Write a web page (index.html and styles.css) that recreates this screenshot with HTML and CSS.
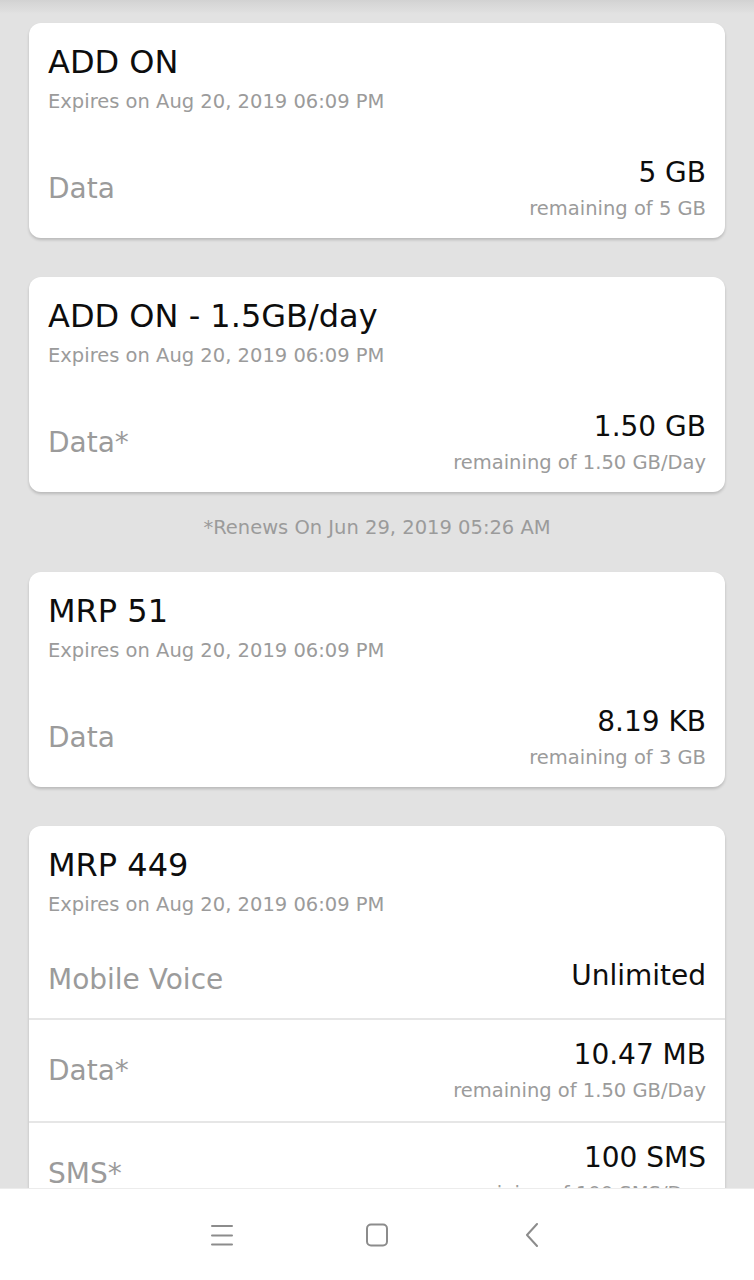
FILE: index.html
```html
<!DOCTYPE html>
<html lang="en">
<head>
    <meta charset="UTF-8">
    <meta name="viewport" content="width=device-width, initial-scale=1.0">
    <title>My Plans</title>
    <link rel="stylesheet" href="styles.css">
</head>
<body>
    <div class="top-shade"></div>

    <main class="plans">
        <section class="card">
            <div class="card-head">
                <h2>ADD ON</h2>
                <p class="expires">Expires on Aug 20, 2019 06:09 PM</p>
            </div>
            <div class="row">
                <span class="label">Data</span>
                <div class="amount">
                    <span class="value">5 GB</span>
                    <span class="sub">remaining of 5 GB</span>
                </div>
            </div>
        </section>

        <section class="card">
            <div class="card-head">
                <h2>ADD ON - 1.5GB/day</h2>
                <p class="expires">Expires on Aug 20, 2019 06:09 PM</p>
            </div>
            <div class="row">
                <span class="label">Data*</span>
                <div class="amount">
                    <span class="value">1.50 GB</span>
                    <span class="sub">remaining of 1.50 GB/Day</span>
                </div>
            </div>
        </section>

        <p class="renews">*Renews On Jun 29, 2019 05:26 AM</p>

        <section class="card">
            <div class="card-head">
                <h2>MRP 51</h2>
                <p class="expires">Expires on Aug 20, 2019 06:09 PM</p>
            </div>
            <div class="row">
                <span class="label">Data</span>
                <div class="amount">
                    <span class="value">8.19 KB</span>
                    <span class="sub">remaining of 3 GB</span>
                </div>
            </div>
        </section>

        <section class="card">
            <div class="card-head">
                <h2>MRP 449</h2>
                <p class="expires">Expires on Aug 20, 2019 06:09 PM</p>
            </div>
            <div class="row single">
                <span class="label">Mobile Voice</span>
                <div class="amount">
                    <span class="value">Unlimited</span>
                </div>
            </div>
            <div class="row divided">
                <span class="label">Data*</span>
                <div class="amount">
                    <span class="value">10.47 MB</span>
                    <span class="sub">remaining of 1.50 GB/Day</span>
                </div>
            </div>
            <div class="row divided">
                <span class="label">SMS*</span>
                <div class="amount">
                    <span class="value">100 SMS</span>
                    <span class="sub">remaining of 100 SMS/Day</span>
                </div>
            </div>
        </section>
    </main>

    <nav class="navbar">
        <svg class="nav-icon" width="24" height="24" viewBox="0 0 24 24">
            <path d="M2 3h20M2 12.5h20M2 21.5h20" />
        </svg>
        <svg class="nav-icon" width="24" height="24" viewBox="0 0 24 24">
            <rect x="2" y="1.5" width="20" height="21" rx="4" />
        </svg>
        <svg class="nav-icon" width="24" height="24" viewBox="0 0 24 24">
            <path d="M17 1L7 12l10 11" />
        </svg>
    </nav>
</body>
</html>
```

FILE: styles.css
```css
body {
    font-family: "DejaVu Sans", Roboto, sans-serif;
    margin: 0;
    padding: 0;
    background-color: #e2e2e2;
    height: 1280px;
    overflow: hidden;
}

.top-shade {
    position: fixed;
    top: 0;
    left: 0;
    right: 0;
    height: 14px;
    background: linear-gradient(#d2d2d2, rgba(226, 226, 226, 0));
}

.plans {
    padding: 23px 29px 0;
    display: flex;
    flex-direction: column;
    gap: 39px;
}

.card {
    background: #fff;
    border-radius: 12px;
    box-shadow: 0 2px 3px rgba(0, 0, 0, 0.18);
    overflow: hidden;
}

.card-head {
    padding: 21px 19px 22px;
}

.card-head h2 {
    margin: 0;
    font-size: 32px;
    line-height: 36px;
    font-weight: 400;
    color: #0d0d0d;
}

.expires {
    margin: 10px 0 0;
    font-size: 19.5px;
    line-height: 24px;
    color: #9b9b9b;
}

.row {
    display: flex;
    justify-content: space-between;
    align-items: center;
    padding: 21px 19px 17px;
}

.row.single {
    padding-top: 21px;
    padding-bottom: 18px;
}

/* label sits a little lower than the value in single-line rows */
.row.single .amount {
    margin-bottom: 8px;
}

.row.divided {
    border-top: 2px solid #e6e6e6;
    padding-top: 19px;
    padding-bottom: 18px;
}

.label {
    font-size: 28px;
    line-height: 32px;
    color: #9b9b9b;
}

.amount {
    display: flex;
    flex-direction: column;
    align-items: flex-end;
    gap: 8px;
}

.value {
    font-size: 28px;
    line-height: 32px;
    color: #0d0d0d;
}

.sub {
    font-size: 19.5px;
    line-height: 24px;
    color: #9b9b9b;
}

.renews {
    margin: -15px 0 -7px;
    text-align: center;
    font-size: 19.5px;
    line-height: 24px;
    color: #9b9b9b;
}

/* System navigation bar */
.navbar {
    position: fixed;
    left: 0;
    right: 0;
    bottom: 0;
    height: 91px;
    background: #fff;
    border-top: 1px solid #ececec;
    display: flex;
    justify-content: center;
    align-items: center;
    gap: 131px;
}

.nav-icon {
    fill: none;
    stroke: #8c8c8c;
    stroke-width: 2;
    stroke-linecap: round;
    stroke-linejoin: round;
}
```
